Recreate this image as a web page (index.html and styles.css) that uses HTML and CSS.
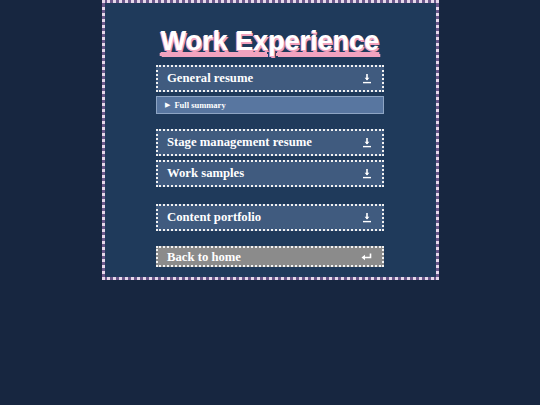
FILE: index.html
```html
<!DOCTYPE html>
<html>
<head>
<meta charset="utf-8">
<link rel="stylesheet" href="styles.css">
</head>
<body>
<main class="panel">
  <h1 class="title">Work Experience</h1>
  <div class="list">
    <a class="item">
      <span>General resume</span>
      <svg class="icon" viewBox="0 0 10 11" width="10" height="11"><path d="M5 1v6" stroke="#fff" stroke-width="1.6"/><path d="M2.6 4.8L5 7.6 7.4 4.8z" fill="#fff"/><path d="M1 9.6h8" stroke="#fff" stroke-width="1.4"/></svg>
    </a>
    <div class="summary"><span class="tri">&#9654;</span>Full summary</div>
    <a class="item gap-lg">
      <span>Stage management resume</span>
      <svg class="icon" viewBox="0 0 10 11" width="10" height="11"><path d="M5 1v6" stroke="#fff" stroke-width="1.6"/><path d="M2.6 4.8L5 7.6 7.4 4.8z" fill="#fff"/><path d="M1 9.6h8" stroke="#fff" stroke-width="1.4"/></svg>
    </a>
    <a class="item gap-sm">
      <span>Work samples</span>
      <svg class="icon" viewBox="0 0 10 11" width="10" height="11"><path d="M5 1v6" stroke="#fff" stroke-width="1.6"/><path d="M2.6 4.8L5 7.6 7.4 4.8z" fill="#fff"/><path d="M1 9.6h8" stroke="#fff" stroke-width="1.4"/></svg>
    </a>
    <a class="item gap-xl">
      <span>Content portfolio</span>
      <svg class="icon" viewBox="0 0 10 11" width="10" height="11"><path d="M5 1v6" stroke="#fff" stroke-width="1.6"/><path d="M2.6 4.8L5 7.6 7.4 4.8z" fill="#fff"/><path d="M1 9.6h8" stroke="#fff" stroke-width="1.4"/></svg>
    </a>
    <a class="item back gap-lg">
      <span>Back to home</span>
      <svg class="icon" viewBox="0 0 11 8" width="11" height="8"><path d="M9.5 0.5v4H3" stroke="#fff" stroke-width="1.6" fill="none"/><path d="M0.5 4.5L4 1.8v5.4z" fill="#fff"/></svg>
    </a>
  </div>
</main>
</body>
</html>
```

FILE: styles.css
```css
html, body {
  margin: 0;
  padding: 0;
}
body {
  background: #172640;
  font-family: "Liberation Serif", "Times New Roman", serif;
  min-height: 405px;
}
.panel {
  box-sizing: border-box;
  width: 337px;
  margin: 0 auto;
  padding: 23px 0 10px;
  border: 3px dotted #e6d8ea;
  background: linear-gradient(#1f3a5b, #1f3a5b) padding-box, #6a578a border-box;
}
.title {
  margin: 0;
  text-align: center;
  font-family: "Liberation Sans", Arial, sans-serif;
  font-weight: bold;
  font-size: 27px;
  line-height: 31px;
  color: #ffffff;
  text-shadow: -1px 1px 0 #f2a3bf, 1px 2px 0 #f2a3bf;
  text-decoration: underline;
  text-decoration-color: #f2a3bf;
  text-decoration-thickness: 3px;
  text-underline-offset: 2px;
}
.list {
  display: flex;
  flex-direction: column;
  align-items: center;
  margin-top: 8px;
}
.item {
  box-sizing: border-box;
  width: 228px;
  display: flex;
  align-items: center;
  justify-content: space-between;
  padding: 4px 10px 4px 9px;
  border: 2px dotted #f2f2f2;
  background: #405b7f;
  color: #ffffff;
  font-weight: bold;
  font-size: 12.7px;
  line-height: 15px;
}
.icon {
  display: block;
  flex: none;
}
.summary {
  box-sizing: border-box;
  width: 228px;
  margin-top: 4px;
  padding: 3px 8px;
  border: 1px solid #8ea5c4;
  background: #5876a0;
  color: #ffffff;
  font-weight: bold;
  font-size: 8.5px;
  line-height: 10px;
}
.tri {
  font-family: "DejaVu Sans", sans-serif;
  font-size: 7px;
  margin-right: 4px;
  vertical-align: 1px;
}
.gap-sm { margin-top: 4px; }
.gap-lg { margin-top: 15px; }
.gap-xl { margin-top: 17px; }
.back {
  background: #8b8b8b;
  padding-top: 2px;
  padding-bottom: 1px;
  line-height: 14px;
}
```
